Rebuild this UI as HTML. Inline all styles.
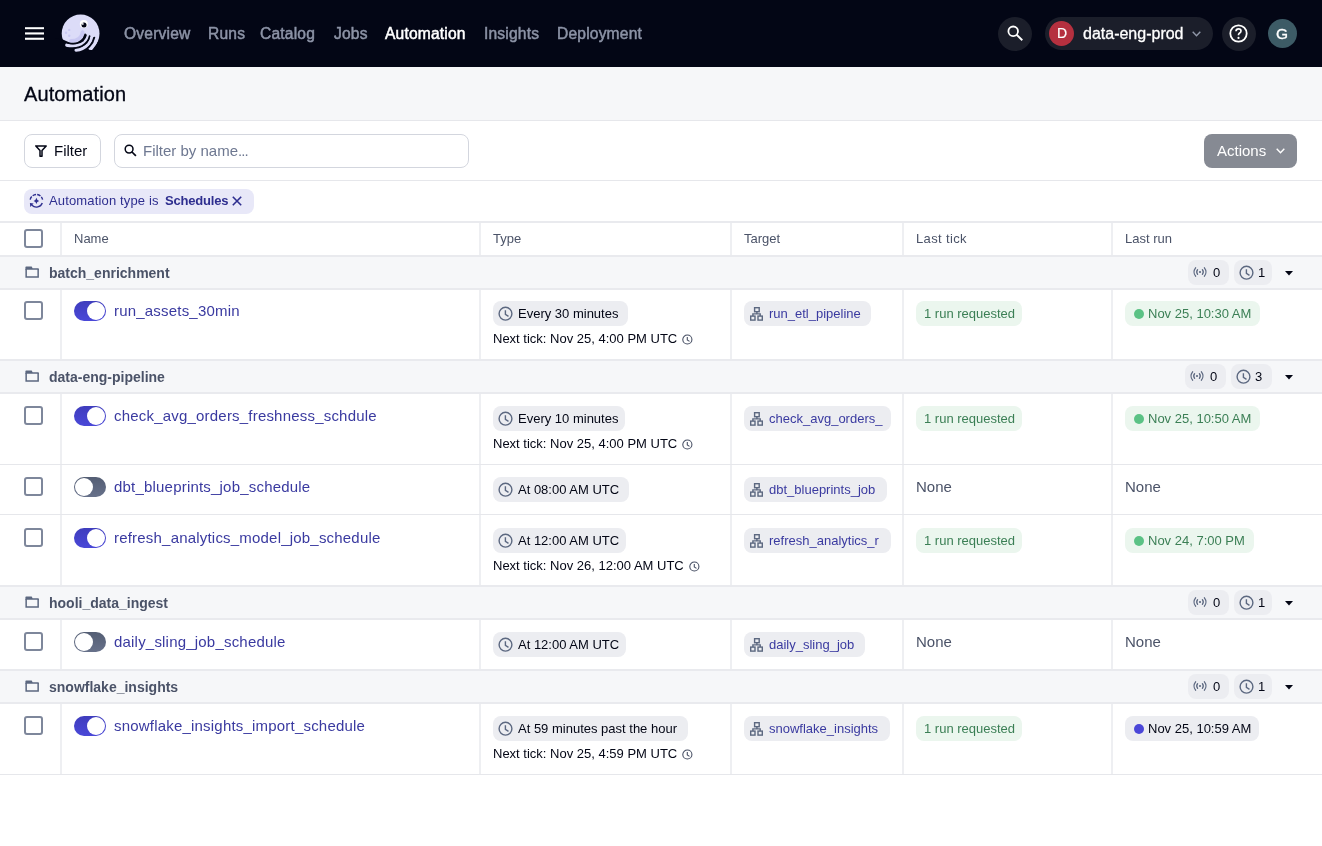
<!DOCTYPE html>
<html><head><meta charset="utf-8"><title>Automation</title>
<style>
*{box-sizing:border-box;margin:0;padding:0}
html,body{width:1322px;height:846px;overflow:hidden;background:#fff;font-family:"Liberation Sans",sans-serif;color:#030615}
.a{position:absolute;white-space:nowrap}
svg{position:absolute;overflow:visible}
#nav{position:absolute;left:0;top:0;width:1322px;height:67px;background:#030615}
.nl{position:absolute;top:24px;font-size:15.6px;letter-spacing:0.18px;line-height:20px;color:#8C93A6;white-space:nowrap;-webkit-text-stroke:0.5px #8C93A6}
.nl.on{color:#fff;-webkit-text-stroke:0.5px #fff}
.circ{position:absolute;border-radius:50%}
#ph{position:absolute;left:0;top:67px;width:1322px;height:54px;background:#F6F7F9;border-bottom:1px solid #E6E7EB}
#fb{position:absolute;left:0;top:121px;width:1322px;height:60px;border-bottom:1px solid #E6E7EB}
.btn{position:absolute;border:1px solid #D3D6DE;border-radius:8px;background:#fff}
.row{position:absolute;left:0;width:1322px}
.hl{position:absolute;left:0;width:1322px;background:#E6E7EB}
.grp{background:#F6F7F9}
.vl{position:absolute;top:0;bottom:0;width:2px;background:#EEEFF2}
.cb{position:absolute;left:24px;width:19px;height:19px;border:2px solid #7E879B;border-radius:3px;background:#fff}
.tg{position:absolute;height:25px;border-radius:8px;background:#ECEDF1;font-size:13px;line-height:25px;white-space:nowrap;color:#030615}
.tgg{background:#EBF6EE;color:#3B7F55}
.lnk{color:#3A3AA0}
.nm{position:absolute;left:114px;font-size:15px;line-height:20px;color:#3A3AA0;white-space:nowrap;letter-spacing:0.2px}
.tog{position:absolute;left:74px;width:32px;height:20px;border-radius:10px;background:linear-gradient(to bottom,#3F3DBD,#4A48D8)}
.tog::after{content:"";position:absolute;top:1px;right:1px;width:18px;height:18px;border-radius:50%;background:#fff}
.tog.off{background:linear-gradient(to bottom,#545E74,#67718A)}
.tog.off::after{right:auto;left:1px}
.nt{position:absolute;left:493px;font-size:13px;line-height:18px;white-space:nowrap;color:#030615}
.none{position:absolute;font-size:15px;line-height:20px;color:#4B5368}
.gname{position:absolute;left:49px;top:8px;font-size:14px;line-height:18px;font-weight:bold;color:#4B5368;white-space:nowrap}
.hd{position:absolute;top:8px;font-size:13px;line-height:17px;color:#4B5368}
</style></head>
<body><div id="root" style="position:absolute;left:0;top:0;width:1322px;height:846px;will-change:transform;background:transparent">

<div id="nav">
  <svg style="left:25px;top:27px" width="19" height="14" viewBox="0 0 19 14"><rect x="0" y="0.2" width="19" height="2" fill="#fff"/><rect x="0" y="5.4" width="19" height="2.1" fill="#fff"/><rect x="0" y="10.7" width="19" height="2.1" fill="#fff"/></svg>
  
  <svg style="left:56px;top:10px" width="50" height="46" viewBox="56 10 50 46">
    <circle cx="80.6" cy="33.4" r="18.9" fill="#DCDCF8"/>
    <path d="M85.3 33.9L89.6 36L94.5 37.4L92.5 42.6L89.6 46.4L87.8 48.6L92 52L101 47L101 57L55 57L55 38L62 39.8L65.7 41.5L69.2 42.9L73.5 43.6L77.8 42.6L82.1 39.7Z" fill="#030615"/>
    <path d="M82.6 32.2C81.8 37.5 77.5 41 71 41" fill="none" stroke="#C9C8F2" stroke-width="3.8" stroke-linecap="round"/>
    <g fill="none" stroke="#DCDCF8" stroke-width="3.1" stroke-linecap="round">
      <path d="M66.7 45.2C72 46.6 80 46.5 84.5 42.3C86.5 40.3 87.8 38 88.3 35.5"/>
      <path d="M76 50.2C80 50 85 47.8 88.5 44C90.5 41.5 91.5 39 92 36"/>
      <path d="M91.2 48.2C92.8 46.5 95 43.5 96 40.5C96.6 38.5 97 37 97.2 35" stroke-width="3.6"/>
    </g>
    <g fill="none" stroke="#030615" stroke-width="1.5" stroke-linecap="round">
      <path d="M85.1 34.3C84 39.5 79 43.4 73.5 43.6C70 43.7 67 42.6 62 39.8"/>
      <path d="M89.6 36C88.8 39.5 86 43.8 82 45.8C78.5 47.6 74.5 48.2 68 48.3"/>
      <path d="M94.5 37.4C94 40 92.5 43.5 89.6 46.4L87.6 48.5"/>
    </g>
    <circle cx="83.8" cy="24.1" r="4" fill="#fff"/>
    <circle cx="84.0" cy="24.9" r="2.5" fill="#030615"/>
    <circle cx="82.8" cy="23.9" r="0.9" fill="#fff"/>
    <circle cx="69.2" cy="29.9" r="1.2" fill="#C9C8F2"/><circle cx="66" cy="32.8" r="1.2" fill="#C9C8F2"/><circle cx="69.2" cy="35.8" r="1.2" fill="#C9C8F2"/>
  </svg>
  <span class="nl" style="left:124px">Overview</span>
  <span class="nl" style="left:208px">Runs</span>
  <span class="nl" style="left:260px">Catalog</span>
  <span class="nl" style="left:334px">Jobs</span>
  <span class="nl on" style="left:385px">Automation</span>
  <span class="nl" style="left:484px">Insights</span>
  <span class="nl" style="left:557px">Deployment</span>

  <div class="circ" style="left:998px;top:17px;width:34px;height:34px;background:#1B1E2A"></div>
  <svg style="left:1006px;top:25px" width="18" height="18" viewBox="0 0 18 18"><circle cx="7.2" cy="6.3" r="4.8" fill="none" stroke="#fff" stroke-width="1.8"/><path d="M10.6 9.8L16.3 15.3" stroke="#fff" stroke-width="1.9"/></svg>
  <div class="a" style="left:1045px;top:17px;width:168px;height:33px;border-radius:17px;background:#1B1E2A"></div>
  <div class="circ" style="left:1049px;top:21px;width:25px;height:25px;background:#B5303F"></div>
  <span class="a" style="left:1057px;top:23px;font-size:14px;line-height:20px;color:#fff;-webkit-text-stroke:0.2px #fff">D</span>
  <span class="a" style="left:1083px;top:24px;font-size:16px;line-height:20px;color:#fff;-webkit-text-stroke:0.3px #fff">data-eng-prod</span>
  <svg style="left:1192px;top:31px" width="9" height="6" viewBox="0 0 9 6"><path d="M0.7 0.8L4.5 4.8L8.3 0.8" fill="none" stroke="#9097A8" stroke-width="1.4"/></svg>
  <div class="circ" style="left:1222px;top:17px;width:34px;height:34px;background:#1B1E2A"></div>
  <svg style="left:1229px;top:24px" width="19" height="19" viewBox="0 0 19 19"><circle cx="9.5" cy="9.5" r="8.2" fill="none" stroke="#fff" stroke-width="1.8"/><path d="M7 7.3Q7 4.8 9.5 4.8Q12 4.8 12 7Q12 8.6 10.2 9.4Q9.5 9.8 9.5 11.2" fill="none" stroke="#fff" stroke-width="1.7"/><circle cx="9.5" cy="13.9" r="1.1" fill="#fff"/></svg>
  <div class="circ" style="left:1268px;top:19px;width:29px;height:29px;background:#3D5B66"></div>
  <span class="a" style="left:1276px;top:24px;font-size:15.5px;line-height:20px;color:#fff;-webkit-text-stroke:0.3px #fff">G</span>
</div>

<div id="ph">
  <span class="a" style="left:24px;top:16px;font-size:20px;line-height:22px;color:#030615;-webkit-text-stroke:0.3px #030615;letter-spacing:0.1px">Automation</span>
</div>

<div id="fb">
  <div class="btn" style="left:24px;top:13px;width:77px;height:34px"></div>
  <svg style="left:35px;top:24px" width="12" height="12" viewBox="0 0 12 12"><path d="M0.8 0.9H11.2L7 5.6V11.2H5V5.6Z" fill="none" stroke="#030615" stroke-width="1.5" stroke-linejoin="round"/></svg>
  <span class="a" style="left:54px;top:20px;font-size:15px;line-height:20px;color:#030615">Filter</span>
  <div class="btn" style="left:114px;top:13px;width:355px;height:34px;border-color:#D3D6DE"></div>
  <svg style="left:124px;top:23px" width="13" height="13" viewBox="0 0 13 13"><circle cx="5.1" cy="5.1" r="3.9" fill="none" stroke="#030615" stroke-width="1.5"/><path d="M8 8L11.9 11.9" stroke="#030615" stroke-width="1.7"/></svg>
  <span class="a" style="left:143px;top:20px;font-size:15px;line-height:20px;color:#6E7891">Filter by name<span style="letter-spacing:-1px">...</span></span>
  <div class="a" style="left:1204px;top:13px;width:93px;height:34px;border-radius:8px;background:#868A93"></div>
  <span class="a" style="left:1217px;top:20px;font-size:15px;line-height:20px;color:#fff">Actions</span>
  <svg style="left:1276px;top:27px" width="9" height="6" viewBox="0 0 9 6"><path d="M0.7 0.8L4.5 4.8L8.3 0.8" fill="none" stroke="#fff" stroke-width="1.4"/></svg>
</div>
<div class="a" style="left:24px;top:189px;width:230px;height:25px;border-radius:8px;background:#E8E8F8"></div>
<svg style="left:26px;top:190px" width="22" height="22" viewBox="26 190 22 22"><g fill="none" stroke="#2E2E8F" stroke-width="1.4"><path d="M30.2 199.7A6.3 6.3 0 0 1 42.6 199.7" stroke-dasharray="3.5 1.2"/><path d="M42.3 202.95A6.3 6.3 0 0 1 32 205.3"/></g><path d="M29.9 202.9L33.6 203.4L30.3 206.9Z" fill="#2E2E8F"/><path d="M36.4 197.8Q36.9 200.4 39.2 200.9Q36.9 201.4 36.4 204Q35.9 201.4 33.6 200.9Q35.9 200.4 36.4 197.8Z" fill="#2E2E8F"/></svg>
<span class="a" style="left:49px;top:192px;font-size:13px;line-height:18px;color:#2E2E8F;letter-spacing:0.15px">Automation type is</span>
<span class="a" style="left:165px;top:192px;font-size:13px;line-height:18px;color:#2E2E8F;font-weight:bold;letter-spacing:-0.2px">Schedules</span>
<svg style="left:232px;top:196px" width="10" height="10" viewBox="0 0 10 10"><path d="M0.8 0.8L9.2 9.2M9.2 0.8L0.8 9.2" stroke="#2E2E8F" stroke-width="1.6"/></svg>

<div class="row" style="top:222px;height:34px">
  <div class="vl" style="left:60px"></div><div class="vl" style="left:479px"></div><div class="vl" style="left:730px"></div><div class="vl" style="left:902px"></div><div class="vl" style="left:1111px"></div>
  <div class="cb" style="top:7px"></div>
  <span class="hd" style="left:74px">Name</span>
  <span class="hd" style="left:493px">Type</span>
  <span class="hd" style="left:744px">Target</span>
  <span class="hd" style="left:916px;letter-spacing:0.35px">Last tick</span>
  <span class="hd" style="left:1125px">Last run</span>
</div>

<div class="row grp" style="top:256px;height:33px">
  <svg style="left:25px;top:10px" width="15" height="13" viewBox="0 0 15 13"><path d="M0.4 1.2Q0.4 0.4 1.2 0.4H6.7L7.6 2.2H13.2Q13.9 2.2 13.9 2.9V3.7H0.4Z" fill="#5C6880"/><path d="M1.15 3V10.95H13.15V3" fill="none" stroke="#5C6880" stroke-width="1.5"/></svg>
  <span class="gname">batch_enrichment</span>
  <div class="tg" style="left:1188px;top:4px;width:41px"></div>
  <svg style="left:1193px;top:11px" width="14" height="10" viewBox="0 0 14 10"><g fill="none" stroke="#5C6880" stroke-width="1.3" stroke-linecap="round"><path d="M2.6 0.8C0.6 3.2 0.6 6.8 2.6 9.2"/><path d="M11.4 0.8C13.4 3.2 13.4 6.8 11.4 9.2"/><path d="M4.6 2.7C3.6 4 3.6 6 4.6 7.3"/><path d="M9.4 2.7C10.4 4 10.4 6 9.4 7.3"/></g><circle cx="7" cy="5" r="1.1" fill="#5C6880"/></svg>
  <span class="a" style="left:1213px;top:4px;font-size:13px;line-height:25px">0</span>
  <div class="tg" style="left:1234px;top:4px;width:38px"></div>
  <svg style="left:1239px;top:9px" width="14" height="14" viewBox="0 0 14 14"><circle cx="7.5" cy="7.7" r="6.4" fill="none" stroke="#5C6880" stroke-width="1.4"/><path d="M7.4 4.3V8.4L10.5 10.3" fill="none" stroke="#5C6880" stroke-width="1.4"/></svg>
  <span class="a" style="left:1258px;top:4px;font-size:13px;line-height:25px">1</span>
  <svg style="left:1285px;top:15px" width="8" height="5" viewBox="0 0 8 5"><path d="M0 0H8L4 4.5Z" fill="#030615"/></svg>
</div><div class="row" style="top:289px;height:71px"><div class="vl" style="left:60px"></div><div class="vl" style="left:479px"></div><div class="vl" style="left:730px"></div><div class="vl" style="left:902px"></div><div class="vl" style="left:1111px"></div><div class="cb" style="top:12px;height:19px"></div><div class="tog" style="top:12px"></div><span class="nm" style="top:12px">run_assets_30min</span><div class="tg" style="left:493px;top:12px;width:135px;padding-left:25px">Every 30 minutes</div><svg style="left:498px;top:17px" width="14" height="14" viewBox="0 0 14 14"><circle cx="7.5" cy="7.7" r="6.4" fill="none" stroke="#5C6880" stroke-width="1.4"/><path d="M7.4 4.3V8.4L10.5 10.3" fill="none" stroke="#5C6880" stroke-width="1.4"/></svg><span class="nt" style="top:41px">Next tick: Nov 25, 4:00 PM UTC</span><svg style="left:682px;top:45px" width="10" height="10" viewBox="0 0 14 14"><circle cx="7.5" cy="7.7" r="6.4" fill="none" stroke="#454D62" stroke-width="1.5"/><path d="M7.4 4.3V8.4L10.5 10.3" fill="none" stroke="#454D62" stroke-width="1.5"/></svg><div class="tg lnk" style="left:744px;top:12px;width:127px;padding-left:25px;overflow:hidden">run_etl_pipeline</div><svg style="left:750px;top:18px" width="14" height="14" viewBox="0 0 14 14"><g fill="none" stroke="#5C6880" stroke-width="1.4"><rect x="4.6" y="0.7" width="4.6" height="4"/><rect x="0.7" y="9.1" width="4.3" height="4"/><rect x="8" y="9.1" width="4.3" height="4"/><path d="M6.9 4.7V6.9M2.9 9.1V6.9H10.2V9.1"/></g></svg><div class="tg tgg" style="left:916px;top:12px;width:106px;padding-left:8px">1 run requested</div><div class="tg tgg" style="left:1125px;top:12px;width:135px;padding-left:23px">Nov 25, 10:30 AM</div><div class="circ" style="left:1134px;top:20px;width:10px;height:10px;background:#5BC285"></div></div>
<div class="row grp" style="top:360px;height:33px">
  <svg style="left:25px;top:10px" width="15" height="13" viewBox="0 0 15 13"><path d="M0.4 1.2Q0.4 0.4 1.2 0.4H6.7L7.6 2.2H13.2Q13.9 2.2 13.9 2.9V3.7H0.4Z" fill="#5C6880"/><path d="M1.15 3V10.95H13.15V3" fill="none" stroke="#5C6880" stroke-width="1.5"/></svg>
  <span class="gname">data-eng-pipeline</span>
  <div class="tg" style="left:1185px;top:4px;width:41px"></div>
  <svg style="left:1190px;top:11px" width="14" height="10" viewBox="0 0 14 10"><g fill="none" stroke="#5C6880" stroke-width="1.3" stroke-linecap="round"><path d="M2.6 0.8C0.6 3.2 0.6 6.8 2.6 9.2"/><path d="M11.4 0.8C13.4 3.2 13.4 6.8 11.4 9.2"/><path d="M4.6 2.7C3.6 4 3.6 6 4.6 7.3"/><path d="M9.4 2.7C10.4 4 10.4 6 9.4 7.3"/></g><circle cx="7" cy="5" r="1.1" fill="#5C6880"/></svg>
  <span class="a" style="left:1210px;top:4px;font-size:13px;line-height:25px">0</span>
  <div class="tg" style="left:1231px;top:4px;width:41px"></div>
  <svg style="left:1236px;top:9px" width="14" height="14" viewBox="0 0 14 14"><circle cx="7.5" cy="7.7" r="6.4" fill="none" stroke="#5C6880" stroke-width="1.4"/><path d="M7.4 4.3V8.4L10.5 10.3" fill="none" stroke="#5C6880" stroke-width="1.4"/></svg>
  <span class="a" style="left:1255px;top:4px;font-size:13px;line-height:25px">3</span>
  <svg style="left:1285px;top:15px" width="8" height="5" viewBox="0 0 8 5"><path d="M0 0H8L4 4.5Z" fill="#030615"/></svg>
</div><div class="row" style="top:393px;height:72px"><div class="vl" style="left:60px"></div><div class="vl" style="left:479px"></div><div class="vl" style="left:730px"></div><div class="vl" style="left:902px"></div><div class="vl" style="left:1111px"></div><div class="cb" style="top:13px;height:19px"></div><div class="tog" style="top:13px"></div><span class="nm" style="top:13px">check_avg_orders_freshness_schdule</span><div class="tg" style="left:493px;top:13px;width:132px;padding-left:25px">Every 10 minutes</div><svg style="left:498px;top:18px" width="14" height="14" viewBox="0 0 14 14"><circle cx="7.5" cy="7.7" r="6.4" fill="none" stroke="#5C6880" stroke-width="1.4"/><path d="M7.4 4.3V8.4L10.5 10.3" fill="none" stroke="#5C6880" stroke-width="1.4"/></svg><span class="nt" style="top:42px">Next tick: Nov 25, 4:00 PM UTC</span><svg style="left:682px;top:46px" width="10" height="10" viewBox="0 0 14 14"><circle cx="7.5" cy="7.7" r="6.4" fill="none" stroke="#454D62" stroke-width="1.5"/><path d="M7.4 4.3V8.4L10.5 10.3" fill="none" stroke="#454D62" stroke-width="1.5"/></svg><div class="tg lnk" style="left:744px;top:13px;width:147px;padding-left:25px;overflow:hidden">check_avg_orders_</div><svg style="left:750px;top:19px" width="14" height="14" viewBox="0 0 14 14"><g fill="none" stroke="#5C6880" stroke-width="1.4"><rect x="4.6" y="0.7" width="4.6" height="4"/><rect x="0.7" y="9.1" width="4.3" height="4"/><rect x="8" y="9.1" width="4.3" height="4"/><path d="M6.9 4.7V6.9M2.9 9.1V6.9H10.2V9.1"/></g></svg><div class="tg tgg" style="left:916px;top:13px;width:106px;padding-left:8px">1 run requested</div><div class="tg tgg" style="left:1125px;top:13px;width:135px;padding-left:23px">Nov 25, 10:50 AM</div><div class="circ" style="left:1134px;top:21px;width:10px;height:10px;background:#5BC285"></div></div><div class="row" style="top:465px;height:50px"><div class="vl" style="left:60px"></div><div class="vl" style="left:479px"></div><div class="vl" style="left:730px"></div><div class="vl" style="left:902px"></div><div class="vl" style="left:1111px"></div><div class="cb" style="top:12px;height:19px"></div><div class="tog off" style="top:12px"></div><span class="nm" style="top:12px">dbt_blueprints_job_schedule</span><div class="tg" style="left:493px;top:12px;width:136px;padding-left:25px">At 08:00 AM UTC</div><svg style="left:498px;top:17px" width="14" height="14" viewBox="0 0 14 14"><circle cx="7.5" cy="7.7" r="6.4" fill="none" stroke="#5C6880" stroke-width="1.4"/><path d="M7.4 4.3V8.4L10.5 10.3" fill="none" stroke="#5C6880" stroke-width="1.4"/></svg><div class="tg lnk" style="left:744px;top:12px;width:143px;padding-left:25px;overflow:hidden">dbt_blueprints_job</div><svg style="left:750px;top:18px" width="14" height="14" viewBox="0 0 14 14"><g fill="none" stroke="#5C6880" stroke-width="1.4"><rect x="4.6" y="0.7" width="4.6" height="4"/><rect x="0.7" y="9.1" width="4.3" height="4"/><rect x="8" y="9.1" width="4.3" height="4"/><path d="M6.9 4.7V6.9M2.9 9.1V6.9H10.2V9.1"/></g></svg><span class="none" style="left:916px;top:12px">None</span><span class="none" style="left:1125px;top:12px">None</span></div><div class="row" style="top:515px;height:71px"><div class="vl" style="left:60px"></div><div class="vl" style="left:479px"></div><div class="vl" style="left:730px"></div><div class="vl" style="left:902px"></div><div class="vl" style="left:1111px"></div><div class="cb" style="top:13px;height:19px"></div><div class="tog" style="top:13px"></div><span class="nm" style="top:13px">refresh_analytics_model_job_schedule</span><div class="tg" style="left:493px;top:13px;width:133px;padding-left:25px">At 12:00 AM UTC</div><svg style="left:498px;top:18px" width="14" height="14" viewBox="0 0 14 14"><circle cx="7.5" cy="7.7" r="6.4" fill="none" stroke="#5C6880" stroke-width="1.4"/><path d="M7.4 4.3V8.4L10.5 10.3" fill="none" stroke="#5C6880" stroke-width="1.4"/></svg><span class="nt" style="top:42px">Next tick: Nov 26, 12:00 AM UTC</span><svg style="left:689px;top:46px" width="10" height="10" viewBox="0 0 14 14"><circle cx="7.5" cy="7.7" r="6.4" fill="none" stroke="#454D62" stroke-width="1.5"/><path d="M7.4 4.3V8.4L10.5 10.3" fill="none" stroke="#454D62" stroke-width="1.5"/></svg><div class="tg lnk" style="left:744px;top:13px;width:147px;padding-left:25px;overflow:hidden">refresh_analytics_r</div><svg style="left:750px;top:19px" width="14" height="14" viewBox="0 0 14 14"><g fill="none" stroke="#5C6880" stroke-width="1.4"><rect x="4.6" y="0.7" width="4.6" height="4"/><rect x="0.7" y="9.1" width="4.3" height="4"/><rect x="8" y="9.1" width="4.3" height="4"/><path d="M6.9 4.7V6.9M2.9 9.1V6.9H10.2V9.1"/></g></svg><div class="tg tgg" style="left:916px;top:13px;width:106px;padding-left:8px">1 run requested</div><div class="tg tgg" style="left:1125px;top:13px;width:129px;padding-left:23px">Nov 24, 7:00 PM</div><div class="circ" style="left:1134px;top:21px;width:10px;height:10px;background:#5BC285"></div></div>
<div class="row grp" style="top:586px;height:33px">
  <svg style="left:25px;top:10px" width="15" height="13" viewBox="0 0 15 13"><path d="M0.4 1.2Q0.4 0.4 1.2 0.4H6.7L7.6 2.2H13.2Q13.9 2.2 13.9 2.9V3.7H0.4Z" fill="#5C6880"/><path d="M1.15 3V10.95H13.15V3" fill="none" stroke="#5C6880" stroke-width="1.5"/></svg>
  <span class="gname">hooli_data_ingest</span>
  <div class="tg" style="left:1188px;top:4px;width:41px"></div>
  <svg style="left:1193px;top:11px" width="14" height="10" viewBox="0 0 14 10"><g fill="none" stroke="#5C6880" stroke-width="1.3" stroke-linecap="round"><path d="M2.6 0.8C0.6 3.2 0.6 6.8 2.6 9.2"/><path d="M11.4 0.8C13.4 3.2 13.4 6.8 11.4 9.2"/><path d="M4.6 2.7C3.6 4 3.6 6 4.6 7.3"/><path d="M9.4 2.7C10.4 4 10.4 6 9.4 7.3"/></g><circle cx="7" cy="5" r="1.1" fill="#5C6880"/></svg>
  <span class="a" style="left:1213px;top:4px;font-size:13px;line-height:25px">0</span>
  <div class="tg" style="left:1234px;top:4px;width:38px"></div>
  <svg style="left:1239px;top:9px" width="14" height="14" viewBox="0 0 14 14"><circle cx="7.5" cy="7.7" r="6.4" fill="none" stroke="#5C6880" stroke-width="1.4"/><path d="M7.4 4.3V8.4L10.5 10.3" fill="none" stroke="#5C6880" stroke-width="1.4"/></svg>
  <span class="a" style="left:1258px;top:4px;font-size:13px;line-height:25px">1</span>
  <svg style="left:1285px;top:15px" width="8" height="5" viewBox="0 0 8 5"><path d="M0 0H8L4 4.5Z" fill="#030615"/></svg>
</div><div class="row" style="top:619px;height:51px"><div class="vl" style="left:60px"></div><div class="vl" style="left:479px"></div><div class="vl" style="left:730px"></div><div class="vl" style="left:902px"></div><div class="vl" style="left:1111px"></div><div class="cb" style="top:13px;height:19px"></div><div class="tog off" style="top:13px"></div><span class="nm" style="top:13px">daily_sling_job_schedule</span><div class="tg" style="left:493px;top:13px;width:133px;padding-left:25px">At 12:00 AM UTC</div><svg style="left:498px;top:18px" width="14" height="14" viewBox="0 0 14 14"><circle cx="7.5" cy="7.7" r="6.4" fill="none" stroke="#5C6880" stroke-width="1.4"/><path d="M7.4 4.3V8.4L10.5 10.3" fill="none" stroke="#5C6880" stroke-width="1.4"/></svg><div class="tg lnk" style="left:744px;top:13px;width:121px;padding-left:25px;overflow:hidden">daily_sling_job</div><svg style="left:750px;top:19px" width="14" height="14" viewBox="0 0 14 14"><g fill="none" stroke="#5C6880" stroke-width="1.4"><rect x="4.6" y="0.7" width="4.6" height="4"/><rect x="0.7" y="9.1" width="4.3" height="4"/><rect x="8" y="9.1" width="4.3" height="4"/><path d="M6.9 4.7V6.9M2.9 9.1V6.9H10.2V9.1"/></g></svg><span class="none" style="left:916px;top:13px">None</span><span class="none" style="left:1125px;top:13px">None</span></div>
<div class="row grp" style="top:670px;height:33px">
  <svg style="left:25px;top:10px" width="15" height="13" viewBox="0 0 15 13"><path d="M0.4 1.2Q0.4 0.4 1.2 0.4H6.7L7.6 2.2H13.2Q13.9 2.2 13.9 2.9V3.7H0.4Z" fill="#5C6880"/><path d="M1.15 3V10.95H13.15V3" fill="none" stroke="#5C6880" stroke-width="1.5"/></svg>
  <span class="gname">snowflake_insights</span>
  <div class="tg" style="left:1188px;top:4px;width:41px"></div>
  <svg style="left:1193px;top:11px" width="14" height="10" viewBox="0 0 14 10"><g fill="none" stroke="#5C6880" stroke-width="1.3" stroke-linecap="round"><path d="M2.6 0.8C0.6 3.2 0.6 6.8 2.6 9.2"/><path d="M11.4 0.8C13.4 3.2 13.4 6.8 11.4 9.2"/><path d="M4.6 2.7C3.6 4 3.6 6 4.6 7.3"/><path d="M9.4 2.7C10.4 4 10.4 6 9.4 7.3"/></g><circle cx="7" cy="5" r="1.1" fill="#5C6880"/></svg>
  <span class="a" style="left:1213px;top:4px;font-size:13px;line-height:25px">0</span>
  <div class="tg" style="left:1234px;top:4px;width:38px"></div>
  <svg style="left:1239px;top:9px" width="14" height="14" viewBox="0 0 14 14"><circle cx="7.5" cy="7.7" r="6.4" fill="none" stroke="#5C6880" stroke-width="1.4"/><path d="M7.4 4.3V8.4L10.5 10.3" fill="none" stroke="#5C6880" stroke-width="1.4"/></svg>
  <span class="a" style="left:1258px;top:4px;font-size:13px;line-height:25px">1</span>
  <svg style="left:1285px;top:15px" width="8" height="5" viewBox="0 0 8 5"><path d="M0 0H8L4 4.5Z" fill="#030615"/></svg>
</div><div class="row" style="top:703px;height:71px"><div class="vl" style="left:60px"></div><div class="vl" style="left:479px"></div><div class="vl" style="left:730px"></div><div class="vl" style="left:902px"></div><div class="vl" style="left:1111px"></div><div class="cb" style="top:13px;height:19px"></div><div class="tog" style="top:13px"></div><span class="nm" style="top:13px">snowflake_insights_import_schedule</span><div class="tg" style="left:493px;top:13px;width:195px;padding-left:25px">At 59 minutes past the hour</div><svg style="left:498px;top:18px" width="14" height="14" viewBox="0 0 14 14"><circle cx="7.5" cy="7.7" r="6.4" fill="none" stroke="#5C6880" stroke-width="1.4"/><path d="M7.4 4.3V8.4L10.5 10.3" fill="none" stroke="#5C6880" stroke-width="1.4"/></svg><span class="nt" style="top:42px">Next tick: Nov 25, 4:59 PM UTC</span><svg style="left:682px;top:46px" width="10" height="10" viewBox="0 0 14 14"><circle cx="7.5" cy="7.7" r="6.4" fill="none" stroke="#454D62" stroke-width="1.5"/><path d="M7.4 4.3V8.4L10.5 10.3" fill="none" stroke="#454D62" stroke-width="1.5"/></svg><div class="tg lnk" style="left:744px;top:13px;width:146px;padding-left:25px;overflow:hidden">snowflake_insights</div><svg style="left:750px;top:19px" width="14" height="14" viewBox="0 0 14 14"><g fill="none" stroke="#5C6880" stroke-width="1.4"><rect x="4.6" y="0.7" width="4.6" height="4"/><rect x="0.7" y="9.1" width="4.3" height="4"/><rect x="8" y="9.1" width="4.3" height="4"/><path d="M6.9 4.7V6.9M2.9 9.1V6.9H10.2V9.1"/></g></svg><div class="tg tgg" style="left:916px;top:13px;width:106px;padding-left:8px">1 run requested</div><div class="tg" style="left:1125px;top:13px;width:134px;padding-left:23px">Nov 25, 10:59 AM</div><div class="circ" style="left:1134px;top:21px;width:10px;height:10px;background:#4B47D8"></div></div><div class="hl" style="top:221px;height:2px;background:#E9EAEE"></div><div class="hl" style="top:255px;height:2px;background:#E9EAEE"></div><div class="hl" style="top:288px;height:2px;background:#E9EAEE"></div><div class="hl" style="top:359px;height:2px;background:#E9EAEE"></div><div class="hl" style="top:392px;height:2px;background:#E9EAEE"></div><div class="hl" style="top:464px;height:1px;background:#E6E7EB"></div><div class="hl" style="top:514px;height:1px;background:#E6E7EB"></div><div class="hl" style="top:585px;height:2px;background:#E9EAEE"></div><div class="hl" style="top:618px;height:2px;background:#E9EAEE"></div><div class="hl" style="top:669px;height:2px;background:#E9EAEE"></div><div class="hl" style="top:702px;height:2px;background:#E9EAEE"></div><div class="hl" style="top:774px;height:1px;background:#E6E7EB"></div>
</div></body></html>
